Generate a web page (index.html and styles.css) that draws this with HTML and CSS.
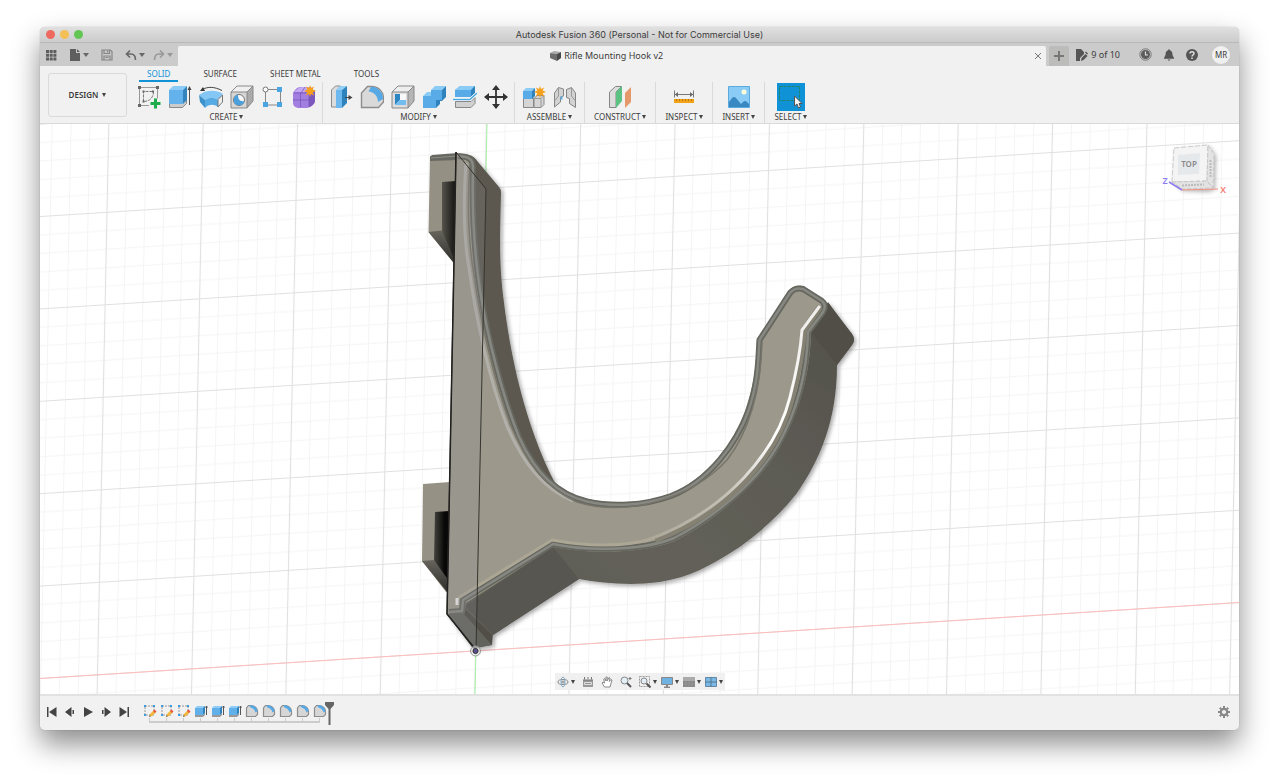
FILE: index.html
```html
<!DOCTYPE html>
<html lang="en">
<head>
    <meta charset="UTF-8">
    <meta name="viewport" content="width=device-width, initial-scale=1.0">
    <title>Autodesk Fusion 360</title>
    <link rel="stylesheet" href="styles.css">
</head>
<body>
    <!-- Shared icons -->
    <svg class="sprite" aria-hidden="true">
        <symbol id="i-sketch" viewBox="0 0 14 14">
            <path d="M2 2h9v9H2z" fill="none" stroke="#999" stroke-dasharray="2 1"/>
            <path d="M1 1h2v2H1zM10 1h2v2h-2zM1 10h2v2H1z" fill="#3d9be0"/>
            <path d="M6 13l1-3 4-4 2 2-4 4z" fill="#f4b73c"/>
            <path d="M10 7l1.500-1.500 2 2L12 9z" fill="#e8563f"/>
            <path d="M6 13l.7-2 1.300 1.300z" fill="#666"/>
        </symbol>
        <symbol id="i-box" viewBox="0 0 14 14">
            <path d="M1 11h8v2H1zM9 13l2-2v-2l-2 2z" fill="#999"/>
            <path d="M1 4h8v7H1z" fill="#62b0ea"/>
            <path d="M1 4l2-2h8L9 4z" fill="#8fcdf8"/>
            <path d="M9 4l2-2v7l-2 2z" fill="#2f83bd"/>
            <path d="M12.500 11V2M11.500 3.500l1-1.500 1 1.500" fill="none" stroke="#555"/>
        </symbol>
        <symbol id="i-fillet" viewBox="0 0 14 14">
            <path d="M1.500 12.500V4l2-2.500H6c4 0 6.500 3 6.500 6v3l-2 2z" fill="#d6d6d6" stroke="#8d8d8d" stroke-width="1.200"/>
            <path d="M4 1.500h2c3.500 0 6 2.500 6.500 5.500l-2 1.500C10 6 8 4 5.500 3.500z" fill="#55a9e6"/>
        </symbol>
        <symbol id="i-star" viewBox="0 0 12 12">
            <path d="M6 0l1 3 3-1.500L8.700 4.500 12 6 8.700 7.300 10.300 10.500 7 9 6 12 5 9 1.700 10.500 3.300 7.300 0 6l3.300-1.500L1.900 1.500 5 3z" fill="#f5a11b"/>
        </symbol>
    </svg>

    <div class="window">
        <header class="titlebar">
            <div class="lights">
                <button class="light red" aria-label="Close window"></button>
                <button class="light yellow" aria-label="Minimize window"></button>
                <button class="light green" aria-label="Zoom window"></button>
            </div>
            <h1>Autodesk Fusion 360 (Personal - Not for Commercial Use)</h1>
        </header>

        <div class="tabstrip">
            <div class="quick">
                <button aria-label="Data panel">
                    <svg width="12" height="12" viewBox="0 0 12 12" fill="#5e5e5e"><path d="M1 1h3v3H1zM4.700 1h3v3h-3zM8.400 1h3v3h-3zM1 4.700h3v3H1zM4.700 4.700h3v3h-3zM8.400 4.700h3v3h-3zM1 8.400h3v3H1zM4.700 8.400h3v3h-3zM8.400 8.400h3v3h-3z"/></svg>
                </button>
                <button class="menu file" aria-label="File">
                    <svg width="12" height="12" viewBox="0 0 12 12" fill="#5e5e5e"><path d="M1 0h6v4h4v8H1zM8 0l3 3H8z"/></svg>
                    <i class="caret"></i>
                </button>
                <button class="save" aria-label="Save">
                    <svg width="12" height="12" viewBox="0 0 12 12" fill="none" stroke="#858585" stroke-width="1.200"><path d="M1 1h8.500L11 2.500V11H1z"/><path d="M3 1v3.500h5.500V1M6.500 1.500v2M3 11V7h6v4M4.500 8.500h3"/></svg>
                </button>
                <button class="menu" aria-label="Undo">
                    <svg width="12" height="12" viewBox="0 0 12 12" fill="none" stroke="#666" stroke-width="1.600"><path d="M5 1.500L1.500 5 5 8.500M2 5h4c3 0 4.500 2 4.500 6"/></svg>
                    <i class="caret"></i>
                </button>
                <button class="menu faded" aria-label="Redo">
                    <svg width="12" height="12" viewBox="0 0 12 12" fill="none" stroke="#666" stroke-width="1.600"><path d="M7 1.500L10.500 5 7 8.500M10 5H6c-3 0-4.500 2-4.500 6"/></svg>
                    <i class="caret"></i>
                </button>
            </div>
            <div class="doc-tab">
                <div class="doc-name">
                    <svg width="13" height="12" viewBox="0 0 13 12"><path d="M1 3l4-2 7 1-4 2z" fill="#aaa"/><path d="M1 3l7 1v7L1 8z" fill="#6d6d6d"/><path d="M8 4l4-2v6l-4 3z" fill="#484848"/></svg>
                    <span>Rifle Mounting Hook v2</span>
                </div>
                <button class="close" aria-label="Close tab">
                    <svg width="8" height="8" viewBox="0 0 8 8"><path d="M1 1l6 6M7 1L1 7" stroke="#777"/></svg>
                </button>
            </div>
            <button class="new-tab" aria-label="New tab">
                <svg width="10" height="10" viewBox="0 0 10 10"><path d="M5 0v10M0 5h10" stroke="#777" stroke-width="2"/></svg>
            </button>
            <div class="account">
                <button class="docs">
                    <svg width="12" height="12" viewBox="0 0 12 12" fill="#555"><path d="M0 0h5l3 3v2L4 9v3H0zM5 12l.5-3 4-4 2 2-4 4z"/><path d="M9 3.500l1-1L12 4.500l-.8 1z"/></svg>
                    <span>9 of 10</span>
                </button>
                <button aria-label="Job status">
                    <svg width="13" height="13" viewBox="0 0 13 13"><circle cx="6.500" cy="6.500" r="5.700" fill="none" stroke="#777"/><circle cx="6.500" cy="6.500" r="4.500" fill="#5c5c5c"/><path d="M6.500 3.500v3.500H9" fill="none" stroke="#ddd" stroke-width="1.200"/></svg>
                </button>
                <button aria-label="Notifications">
                    <svg width="12" height="12" viewBox="0 0 12 12" fill="#555"><path d="M6 0l1 1.200C9 1.800 9.500 3.500 9.500 6L11 9v.8H1V9l1.500-3c0-2.500.5-4.200 2.500-4.800zM4.500 10.500h3L6 12z"/></svg>
                </button>
                <button aria-label="Help">
                    <svg width="12" height="12" viewBox="0 0 12 12"><circle cx="6" cy="6" r="6" fill="#555"/><path d="M4 4.500c0-2.500 4-2.500 4 0C8 6 6 6 6 7.500M6 8.500V10" fill="none" stroke="#e2e2e2" stroke-width="1.500"/></svg>
                </button>
                <button class="avatar">MR</button>
            </div>
        </div>

        <div class="toolbar">
            <button class="workspace">DESIGN <i class="caret"></i></button>
            <div class="ribbon">
                <nav class="ribbon-tabs">
                    <a href="#solid" class="active">SOLID</a>
                    <a href="#surface">SURFACE</a>
                    <a href="#sheet">SHEET METAL</a>
                    <a href="#tools">TOOLS</a>
                </nav>
                <div class="groups">
                    <div class="group large">
                        <div class="icons">
                            <button aria-label="Create sketch">
                                <svg width="24" height="24" viewBox="0 0 24 24"><path d="M2.500 2.500h18v11M12 20.500H2.500v-18" fill="none" stroke="#999"/><path d="M6.500 16.500v-10h10c0 6-4 10-10 10z" fill="none" stroke="#777" stroke-dasharray="3 1"/><path d="M1 1h3v3H1zM19 1h3v3h-3zM1 19h3v3H1zM5.500 5.500h2v2h-2zM15 5.500h2v2h-2zM5.500 15.500h2v2h-2z" fill="#666"/><path d="M18.500 13.500v10M13.500 18.500h10" stroke="#1fac4b" stroke-width="3"/></svg>
                            </button>
                            <button aria-label="Extrude">
                                <svg width="24" height="24" viewBox="0 0 24 24"><path d="M1.500 18v4.500h13l4-4V15z" fill="#ccc" stroke="#8a8a8a"/><path d="M1 5h14v14H1z" fill="#64b2eb"/><path d="M1 5l4-4h14l-4 4z" fill="#8acbf8"/><path d="M15 5l4-4v14l-4 4z" fill="#3285bd"/><path d="M21.500 20V3" stroke="#555"/><path d="M19.500 5l2-4 2 4z" fill="#444"/></svg>
                            </button>
                            <button aria-label="Revolve">
                                <svg width="24" height="24" viewBox="0 0 24 24"><path d="M0 10C6 5 17 4 24 9l-5 6c-4-3-9-3-13 0z" fill="#84c7f5"/><path d="M0 10l6 5v8l-5-6z" fill="#3d92cc"/><path d="M6 15c4-3 9-3 13 0v7c-4-3-9-3-13 1z" fill="#57abe4"/><path d="M19 14.500l4.500-4.500v7L19 22z" fill="#eee" stroke="#777"/><path d="M3 4.500c6-3 12-3 20 1" fill="none" stroke="#444"/><path d="M1 6l3-4 2 4z" fill="#333"/></svg>
                            </button>
                            <button aria-label="Hole">
                                <svg width="24" height="24" viewBox="0 0 24 24"><path d="M1 7l6-6h16l-6 6z" fill="#f0f0f0"/><path d="M17 7l6-6v15l-6 7z" fill="#aaa"/><path d="M1 7h16v16H1z" fill="#d6d6d6"/><path d="M1 7l6-6h16v15l-6 7H1zM1 7h16v16M17 7l6-6" fill="none" stroke="#888"/><circle cx="9" cy="15" r="5.500" fill="#f7f7f7" stroke="#777"/><path d="M8 9.800c0 5 2 7 6.300 6.200A5.300 5.300 0 1 1 8 9.800z" fill="#4aa0dc"/></svg>
                            </button>
                            <button aria-label="Pattern">
                                <svg width="24" height="24" viewBox="0 0 24 24"><path d="M5 4.500h13M4.500 5v13M6 20h12M19.500 6v12" stroke="#888"/><path d="M16 2h5v5h-5zM2 17h5v5H2zM16 17h5v5h-5z" fill="#4ba5e2"/><circle cx="4.500" cy="4.500" r="2.500" fill="#fff" stroke="#777"/></svg>
                            </button>
                            <button aria-label="Create form">
                                <svg width="24" height="24" viewBox="0 0 24 24"><path d="M1 9q0-2 2-4l2-2q2-1 4-1h10l4 5v9q0 2-2 4-3 3-6 3H6q-5-1-5-5z" fill="#a27ee0"/><path d="M2 7l4-3.500Q8 2 11 2h7l-3 5H5z" fill="#c4a8f2"/><path d="M17 8l6-3v11q-1 4-6 6z" fill="#7b58bd"/><path d="M1 15h16l6-4M8.500 8v14M1.500 8H17v14M9 8l4-6" fill="none" stroke="#7452b4" stroke-width=".7"/><use href="#i-star" x="12" y="0" width="12" height="12"/></svg>
                            </button>
                        </div>
                        <button class="group-label">CREATE<i class="caret"></i></button>
                    </div>
                    <div class="group large">
                        <div class="icons">
                            <button aria-label="Press pull">
                                <svg width="24" height="24" viewBox="0 0 24 24"><path d="M2.500 22V5l4-4h5L8 5v17z" fill="#ddd" stroke="#8a8a8a"/><path d="M7 5h6v18H7z" fill="#6db8ee"/><path d="M7 5l4-4h7l-5 4z" fill="#93d0f8"/><path d="M13 5l5-4v17l-5 5z" fill="#2f83bd"/><path d="M16 12.500h4" stroke="#444"/><path d="M19.500 10l4 2.500-4 2.500z" fill="#444"/></svg>
                            </button>
                            <button aria-label="Fillet">
                                <svg width="24" height="24" viewBox="0 0 24 24"><path d="M1.500 22.500V8l6-6.500h4c7 0 12 5 12 12V17l-5 5.500z" fill="#d9d9d9" stroke="#8d8d8d" stroke-width="1.400"/><path d="M11 1.800c7 0 12 5 12 12.200l-5 3C18 11 14 7 8.500 6.500z" fill="#57a9e5"/></svg>
                            </button>
                            <button aria-label="Shell">
                                <svg width="24" height="24" viewBox="0 0 24 24"><path d="M1 7l6-6h16l-6 6z" fill="#eee"/><path d="M17 7l6-6v15l-6 7z" fill="#b5b5b5"/><path d="M1 7h16v16H1z" fill="#ddd"/><path d="M1 7l6-6h16v15l-6 7H1zM1 7h16v16M17 7l6-6" fill="none" stroke="#888"/><path d="M4 9h11v11H4z" fill="#f8f8f8"/><path d="M4 9h5v6l-5 5z" fill="#2d86c4"/><path d="M4 20l5-5h6v5z" fill="#72bdf0"/></svg>
                            </button>
                            <button aria-label="Combine">
                                <svg width="24" height="24" viewBox="0 0 24 24"><path d="M1 11l4-4h6l-1 4zM9 5l4-4h11l-4 4z" fill="#8bccf7"/><path d="M1 11h8V5h11v10h-6v8H1z" fill="#58abe6"/><path d="M20 5l4-4v11l-4 4h-2v3l-4 4v-8h6z" fill="#2f83bd"/></svg>
                            </button>
                            <button aria-label="Split body">
                                <svg width="24" height="24" viewBox="0 0 24 24"><path d="M2 5l5-4h15v7l-4 4H2z" fill="#58abe6"/><path d="M2 5l5-4h15l-4 4z" fill="#8bccf7"/><path d="M18 5l4-4v7l-4 4z" fill="#2f83bd"/><path d="M2.500 16.500H18l4-4v6l-4 4H2.500z" fill="#d0d0d0" stroke="#888"/><path d="M0 14.500h17L24 8" fill="none" stroke="#fff" stroke-width="3"/><path d="M0 14.500h17L24 8" fill="none" stroke="#49a7e2" stroke-width="1.400"/></svg>
                            </button>
                            <button aria-label="Move">
                                <svg width="24" height="24" viewBox="0 0 24 24"><path d="M12 3v18M3 12h18" stroke="#333" stroke-width="1.800"/><path d="M12 0l4 5H8zM12 24l4-5H8zM0 12l5-4v8zM24 12l-5-4v8z" fill="#333"/></svg>
                            </button>
                        </div>
                        <button class="group-label">MODIFY<i class="caret"></i></button>
                    </div>
                    <div class="group">
                        <div class="icons">
                            <button aria-label="New component">
                                <svg width="24" height="24" viewBox="0 0 24 24"><path d="M1.500 13.500h10v9h-10zM12 13.500l3-3h7v9l-3 3h-7z" fill="#d5d5d5" stroke="#888"/><path d="M12 13.500h7v9M19 13.500l3-3" fill="none" stroke="#999"/><path d="M1 6h9v8H1z" fill="#58abe6"/><path d="M1 6l3-3h9l-3 3z" fill="#8bccf7"/><path d="M10 6l3-3v8l-3 3z" fill="#2f83bd"/><use href="#i-star" x="12" y="1" width="12" height="12"/></svg>
                            </button>
                            <button aria-label="Joint">
                                <svg width="24" height="24" viewBox="0 0 24 24" stroke-linejoin="round"><path d="M1.500 8l4-5.500 5 1.500v7l-3 1v5l-6 5zM22.500 8l-4-5.500-5 2v8l3 1v5l6 4z" fill="#d3d3d3" stroke="#858585"/><path d="M5.500 3v8l-4 5M18.500 3v8l4 5" fill="none" stroke="#999"/><path d="M7.500 11.500h2v3h-2z" fill="#5eb1ea"/></svg>
                            </button>
                        </div>
                        <button class="group-label">ASSEMBLE<i class="caret"></i></button>
                    </div>
                    <div class="group single">
                        <div class="icons">
                            <button aria-label="Offset plane">
                                <svg width="24" height="24" viewBox="0 0 24 24"><path d="M1.500 22.500V7l6-5.500h6L8 7v15.500z" fill="#ddd" stroke="#858585"/><path d="M8 7l6-6v15l-6 7z" fill="#5cc283"/><path d="M17 8l6-6v15l-6 6z" fill="#e5986a"/></svg>
                            </button>
                        </div>
                        <button class="group-label">CONSTRUCT<i class="caret"></i></button>
                    </div>
                    <div class="group single">
                        <div class="icons">
                            <button aria-label="Measure">
                                <svg width="24" height="24" viewBox="0 0 24 24"><path d="M2.500 5.500v7M21.500 5.500v7M3 9.500h18" stroke="#777"/><path d="M3 9.500L6 7v5zM21 9.500L18 7v5z" fill="#666"/><path d="M2 14h20v4H2z" fill="#f5a316"/><path d="M4.500 14v2M7.500 14v2M10.500 14v2M13.500 14v2M16.500 14v2M19.500 14v2" stroke="#b5781a"/></svg>
                            </button>
                        </div>
                        <button class="group-label">INSPECT<i class="caret"></i></button>
                    </div>
                    <div class="group single">
                        <div class="icons">
                            <button aria-label="Insert image">
                                <svg width="24" height="24" viewBox="0 0 24 24"><path d="M1.500 1.500h21v21h-21z" fill="#8bccf7" stroke="#5aaae0"/><path d="M2 17l3-4q2-2 4 0l5 6 2-2q2-2 4 0l2 2v3H2z" fill="#3988c2"/><circle cx="17" cy="7" r="2.500" fill="#fffbd8"/></svg>
                            </button>
                        </div>
                        <button class="group-label">INSERT<i class="caret"></i></button>
                    </div>
                    <div class="group single">
                        <div class="icons">
                            <button aria-label="Select" class="selected">
                                <svg width="28" height="28" viewBox="0 0 28 28"><path d="M2.500 3.500h20v14h-20z" fill="none" stroke="#20846d" stroke-dasharray="3 1"/><path d="M17.500 13v10l2.500-2 1.500 4 2-1-1.500-3.500h3z" fill="#f5f5f5" stroke="#555"/></svg>
                            </button>
                        </div>
                        <button class="group-label">SELECT<i class="caret"></i></button>
                    </div>
                </div>
            </div>
        </div>

        <main class="viewport">
            <svg class="scene" viewBox="40 124 1199 570" preserveAspectRatio="xMidYMid slice" role="img" aria-label="Rifle mounting hook model">
                <defs>
                    <pattern id="grid" x="-50" y="-50" width="100" height="100" patternUnits="userSpaceOnUse" patternTransform="matrix(.945 -.0598 -.019 .925 475.500 650.900)">
                        <path d="M10 0v100M30 0v100M70 0v100M90 0v100M0 10h100M0 30h100M0 70h100M0 90h100" stroke="#f3f3f3"/>
                        <path d="M50 0v100M0 50h100" stroke="#e0e0e0" stroke-width="1.200"/>
                    </pattern>
                    <linearGradient id="recess" x1="0" x2="1" y1="0" y2="0">
                        <stop offset="0" stop-color="#56544c"/>
                        <stop offset=".9" stop-color="#181816"/>
                    </linearGradient>
                    <linearGradient id="recess2" x1="0" x2="1" y1="0" y2="0">
                        <stop offset="0" stop-color="#44433d"/>
                        <stop offset=".7" stop-color="#080808"/>
                    </linearGradient>
                    <linearGradient id="side" x1="0" x2="1" y1="1" y2="0">
                        <stop offset="0" stop-color="#605e57"/>
                        <stop offset=".25" stop-color="#605e57"/>
                        <stop offset=".4" stop-color="#63615a"/>
                        <stop offset=".75" stop-color="#5b5952"/>
                        <stop offset="1" stop-color="#514f47"/>
                    </linearGradient>
                    <linearGradient id="under" x1="0" x2="0" y1="0" y2="1">
                        <stop offset="0" stop-color="#66645c"/>
                        <stop offset="1" stop-color="#2c2b28"/>
                    </linearGradient>
                    <linearGradient id="shine" gradientUnits="userSpaceOnUse" x1="640" y1="545" x2="810" y2="330">
                        <stop offset="0" stop-color="#aaa595"/>
                        <stop offset=".35" stop-color="#c5c2b8"/>
                        <stop offset=".6" stop-color="#fff"/>
                        <stop offset="1" stop-color="#f0efec"/>
                    </linearGradient>
                    <filter id="shadow" x="-10%" y="-10%" width="120%" height="120%">
                        <feDropShadow dx="2" dy="2" stdDeviation="2" flood-opacity=".35"/>
                    </filter>
                </defs>
                <rect x="40" y="124" width="1199" height="570" fill="#fff"/>
                <rect x="40" y="124" width="1199" height="570" fill="url(#grid)"/>
                <path d="M40 678.500L1239 602.500" stroke="#ffbcbc"/>
                <path d="M487 124L475 694" stroke="#a6f3a6"/>

                <!-- Wall blocks behind the plate -->
                <path d="M430 156l26-2v106l-3 2-24.500-30z" fill="#949084"/>
                <path d="M430 161v-4l2-2 26-2v7z" fill="#676861"/>
                <path d="M431 158l26-2" stroke="#8d8e88"/>
                <path d="M428.500 232l13-1.500L456 245v20l-3-3z" fill="url(#under)"/>
                <path d="M442 182l14-1v82l-14-32z" fill="url(#recess)"/>
                <path d="M423 484l27-2v110l-4 0-24-31z" fill="#959185"/>
                <path d="M422 561l12.500-1L448 575v18z" fill="url(#under)"/>
                <path d="M435 512l14-1v70l-15-21z" fill="url(#recess2)"/>

                <!-- Extruded sides -->
                <g filter="url(#shadow)">
                    <path d="M456 154L469 155Q474 156 478 162L499 187Q501 189 501 193C500 235 499 260 503 295C510 355 525 425 555 483L535 478L470 330L462 200z" fill="#5b5850"/>
                    <path d="M463 600L552 540C600 546 640 540 668 530C730 500 785 440 800 360L811 332L828 302Q845 325 852 334Q856 340 852 345L837 365C837 420 820 460 797 493C780 515 755 537 735 550C710 566 690 577 660 582C630 586 602 583 579 579L493 635L492 645L477 648L475 651L447 614z" fill="url(#side)"/>
                </g>
                <path d="M811 332L828 303Q845 325 852 334Q856 340 852 345L837 365z" fill="#504e47"/>
                <path d="M553 547L579 579L493 635L465 606z" fill="#585650"/>
                <path d="M447 614l18-1 27 32-15 2-2 4z" fill="#63635d"/>
                <path d="M466 610l26 25v10l-28-31z" fill="#504e47"/>

                <!-- Front face and its rounded rim -->
                <path d="M456 154L466 155Q474 157 475 166C474 205 475 245 482 290C489 335 504 395 521 437C537 473 560 492 587 499C612 505 642 504 670 494C708 479 734 441 745 411C756 380 756 360 757 339L788 292Q794 284 804 286L824 300Q829 305 825 313L811 333C810 375 799 412 780 447C757 487 712 522 675 541C645 553 592 555 553 547L466 603L464 614L447 614z" fill="#9c988b"/>
                <path d="M458 156L466 157Q473 159 473 167C472 205 473 245 480 290C487 335 502 395 519 437C536 475 559 495 587 501.500C612 507 643 506 671 496C710 481 737 442 748 412C759 380 758 360 759.500 340L790 293Q795 287 803 289L822 301Q827 305 823 312L808 332C807 375 797 411 778 445C755 485 711 519 674 538C645 550 592 552 553 544L463 600L462 611L449 612" fill="none" stroke="#66675f" stroke-width="6"/>
                <path d="M458 156L466 157Q473 159 473 167C472 205 473 245 480 290C487 335 502 395 519 437C536 475 559 495 587 501.500C612 507 643 506 671 496C710 481 737 442 748 412C759 380 758 360 759.500 340L790 293Q795 287 803 289L822 301Q827 305 823 312L808 332C807 375 797 411 778 445C755 485 711 519 674 538C645 550 592 552 553 544L463 600L462 611L449 612" fill="none" stroke="#878882" stroke-width="2.500"/>
                <path d="M466 163C463 205 464 240 469 268C476 320 490 382 507 426C523 463 543 489 573 501" fill="none" stroke="#b2b0aa" stroke-width="3"/>
                <path d="M470 163C467 205 468 240 474 275C480 320 495 384 511 426C528 465 548 490 577 502C625 517 690 500 727 460C749 432 761 390 762 342" fill="none" stroke="#77756b" stroke-width="1.500"/>
                <path d="M458 598L552 540C590 547 625 547 655 538" fill="none" stroke="#aca695" stroke-width="3"/>
                <path d="M655 540C730 512 779 452 792 397Q802 358 804 330L820 307" fill="none" stroke="#858173" stroke-width="6"/>
                <path d="M645 541C728 512 777 450 790 397Q800 358 802 330L819 307" fill="none" stroke="url(#shine)" stroke-width="3" stroke-linecap="round"/>
                <path d="M457 598v7" stroke="#e8e7e5" stroke-width="3"/>

                <!-- Sketch plane -->
                <path d="M456 152L486 189L476 650L447 614z" fill="#909098" fill-opacity=".2" stroke="#35342f"/>
                <path d="M456 152L454 262L447 614L476 650" fill="none" stroke="#22211f" stroke-width="1.500"/>
                <circle cx="475.500" cy="651" r="5" fill="#ddd" fill-opacity=".6" stroke="#999"/>
                <circle cx="475.500" cy="651" r="2.500" fill="#5a4f90" stroke="#333"/>
            </svg>

            <svg class="view-cube" width="72" height="54" viewBox="0 0 72 54" role="img" aria-label="View cube">
                <defs>
                    <filter id="cube-shadow" x="-20%" y="-20%" width="150%" height="150%">
                        <feDropShadow dx="2" dy="2" stdDeviation="2" flood-opacity=".3"/>
                    </filter>
                </defs>
                <path d="M14 6l34-3 6 9-1 34-7 2-25-1-9-9z" fill="#dedede" filter="url(#cube-shadow)"/>
                <path d="M14 6l34-3-1 36-35 1z" fill="#f4f4f4" stroke="#ccc" stroke-dasharray="5 2"/>
                <path d="M18 13l22-2-1 21-21 1z" fill="#e6e9ec"/>
                <path d="M48 3l6 9-1 34-6-7zM12 40l35-1 6 7-30 1z" fill="#e3e3e3" stroke="#c7c7c7" stroke-dasharray="4 2"/>
                <path d="M22 43.500l22-1M50.500 18v18" stroke="#bbb" stroke-width="2" stroke-dasharray="2 1"/>
                <path d="M9 40l13 8" stroke="#8d7bf0" stroke-width="1.500"/>
                <path d="M22 48l36-1" stroke="#f0917f"/>
                <text x="29" y="25" class="cube-face">TOP</text>
                <text x="5" y="42" class="axis-z">Z</text>
                <text x="63" y="51" class="axis-x">X</text>
            </svg>

            <div class="navbar">
                <button class="menu" aria-label="Orbit"><svg width="12" height="12" viewBox="0 0 12 12" fill="none" stroke="#888"><ellipse cx="6" cy="6" rx="5" ry="2.500"/><ellipse cx="6" cy="6" rx="2" ry="5" stroke="#7fa9c6"/><path d="M4.500 6h3M6 4.500v3"/></svg><i class="caret"></i></button>
                <button aria-label="Look at"><svg width="12" height="12" viewBox="0 0 12 12"><path d="M1 4h10v7H1z" fill="#999"/><path d="M2.500 3.500V1M6 3V1M9.500 3.500V1M1 4h10" stroke="#777"/><path d="M2.500 6.500h7v2h-7z" fill="none" stroke="#ddd"/></svg></button>
                <button aria-label="Pan"><svg width="12" height="12" viewBox="0 0 12 12"><path d="M3.500 11L1 7l1-1 1.500 1-.7-4 1-.5L5 5V1h1.200v4L8 1.500l1 .5-.7 3.500L10 3.500l1 .5-2 7z" fill="#fff" stroke="#888"/></svg></button>
                <button class="zoom" aria-label="Zoom"><svg width="12" height="12" viewBox="0 0 12 12"><circle cx="4.500" cy="4.500" r="3.500" fill="#e3eff6" stroke="#888"/><path d="M7 7l4 4" stroke="#555" stroke-width="2"/><path d="M10 1v3M8.500 2.500h3" stroke="#777"/></svg></button>
                <button class="menu" aria-label="Fit"><svg width="12" height="12" viewBox="0 0 12 12"><path d="M.5.500h10v10H.5z" fill="none" stroke="#999" stroke-dasharray="2 1"/><circle cx="5" cy="5" r="3" fill="#e3eff6" stroke="#888"/><path d="M7.500 7.500l4 4" stroke="#555" stroke-width="2"/></svg><i class="caret"></i></button>
                <button class="menu" aria-label="Display settings"><svg width="12" height="12" viewBox="0 0 12 12"><path d="M.5 1.500h11v7H.5z" fill="#6eb2e2" stroke="#888"/><path d="M5 9h2v1.500h2V12H3v-1.500h2z" fill="#888"/></svg><i class="caret"></i></button>
                <button class="menu" aria-label="Grid and snaps"><svg width="12" height="12" viewBox="0 0 12 12"><path d="M0 1h12v10H0z" fill="#888"/><path d="M0 1h12v4H0z" fill="#aaa"/><path d="M3 5v6M6 5v6M9 5v6M0 8h12" stroke="#939393"/></svg><i class="caret"></i></button>
                <button class="menu" aria-label="Viewports"><svg width="12" height="12" viewBox="0 0 12 12"><path d="M.5 1.500h11v9H.5z" fill="#7ab9e6" stroke="#6388a3"/><path d="M6 1v10M0 6h12" stroke="#54788f"/></svg><i class="caret"></i></button>
            </div>
        </main>

        <footer class="timeline">
            <div class="playback">
                <button aria-label="Go to start"><svg width="10" height="10" viewBox="0 0 10 10"><path d="M0 0h1.500v10H0zM9.500 0v10L2 5z"/></svg></button>
                <button aria-label="Step back"><svg width="10" height="10" viewBox="0 0 10 10"><path d="M6.500 0v10L0 5zM7.500 3H9v4H7.500z"/></svg></button>
                <button aria-label="Play"><svg width="10" height="10" viewBox="0 0 10 10"><path d="M1 0l9 5-9 5z"/></svg></button>
                <button aria-label="Step forward"><svg width="10" height="10" viewBox="0 0 10 10"><path d="M3.500 0v10L10 5zM1 3h1.500v4H1z"/></svg></button>
                <button aria-label="Go to end"><svg width="10" height="10" viewBox="0 0 10 10"><path d="M8.500 0H10v10H8.500zM.5 0v10L8 5z"/></svg></button>
            </div>
            <div class="history">
                <div class="features">
                    <button aria-label="Sketch 1"><svg><use href="#i-sketch"/></svg></button>
                    <button aria-label="Sketch 2"><svg><use href="#i-sketch"/></svg></button>
                    <button aria-label="Sketch 3"><svg><use href="#i-sketch"/></svg></button>
                    <button aria-label="Extrude 1"><svg><use href="#i-box"/></svg></button>
                    <button aria-label="Extrude 2"><svg><use href="#i-box"/></svg></button>
                    <button aria-label="Extrude 3"><svg><use href="#i-box"/></svg></button>
                    <button aria-label="Fillet 1"><svg><use href="#i-fillet"/></svg></button>
                    <button aria-label="Fillet 2"><svg><use href="#i-fillet"/></svg></button>
                    <button aria-label="Fillet 3"><svg><use href="#i-fillet"/></svg></button>
                    <button aria-label="Fillet 4"><svg><use href="#i-fillet"/></svg></button>
                    <button aria-label="Fillet 5"><svg><use href="#i-fillet"/></svg></button>
                </div>
                <div class="track"></div>
            </div>
            <svg class="marker" width="9" height="23" viewBox="0 0 9 23"><path d="M0 0h9v3L5.500 7v16h-2V7L0 3z" fill="#666"/></svg>
            <button class="settings" aria-label="Timeline settings">
                <svg width="12" height="12" viewBox="0 0 12 12"><circle cx="6" cy="6" r="3.200" fill="none" stroke="#888" stroke-width="2.200"/><path d="M6 0v2M6 10v2M0 6h2M10 6h2M1.800 1.800l1.400 1.400M8.800 8.800l1.400 1.400M10.200 1.800L8.800 3.200M3.200 8.800l-1.400 1.400" stroke="#888" stroke-width="2"/></svg>
            </button>
        </footer>
    </div>
</body>
</html>
```

FILE: styles.css
```css
:root {
    --chrome: #cbcbcb;
    --panel: #f1f1f1;
    --line: #dadada;
    --text: #3c3c3c;
    --accent: #1092d6;
}

* {
    box-sizing: border-box;
    margin: 0;
    padding: 0;
}

body {
    display: flex;
    min-height: 100vh;
    padding: 27px 40px 53px;
    background: #fff;
    color: var(--text);
    font-family: "Noto Sans", "Open Sans", sans-serif;
    font-size: 8px;
    line-height: 12px;
}

button {
    display: flex;
    align-items: center;
    justify-content: center;
    border: none;
    background: none;
    color: inherit;
    font: inherit;
    cursor: pointer;
}

svg {
    display: block;
    flex: none;
}

.sprite {
    position: absolute;
    width: 0;
    height: 0;
}

.caret {
    border: 2px solid transparent;
    border-top: 4px solid #444;
    border-bottom: 0;
}

.window {
    flex: 1;
    display: flex;
    flex-direction: column;
    min-width: 0;
    border-radius: 5px;
    background: var(--panel);
    box-shadow: 0 0 1px rgba(0, 0, 0, 0.4), 0 14px 28px rgba(0, 0, 0, 0.45);
    overflow: hidden;
}

/* Title bar */
.titlebar {
    display: flex;
    align-items: center;
    height: 16px;
    background: linear-gradient(#e0e0e0, #cccccc);
    border-bottom: 1px solid #b9b9b9;
}

.titlebar h1 {
    flex: 1;
    padding-right: 50px;
    text-align: center;
    font-family: Inter, "Liberation Sans", sans-serif;
    font-size: 9px;
    font-weight: 400;
}

.lights {
    display: flex;
    gap: 5px;
    width: 50px;
    padding-left: 6px;
}

.light {
    width: 9px;
    height: 9px;
    border-radius: 50%;
}

.red { background: #ee6a5e; }
.yellow { background: #f4bf56; }
.green { background: #62c554; }

/* Document tabs */
.tabstrip {
    display: flex;
    height: 23px;
    background: var(--chrome);
}

.quick {
    display: flex;
    align-items: center;
    gap: 8px;
    width: 138px;
    padding-left: 5px;
}

.menu {
    gap: 4px;
}

.quick .file {
    gap: 2px;
    margin-left: 4px;
}

.quick .save {
    margin-left: 4px;
    margin-right: 4px;
}

.quick .caret {
    border-width: 4px 3px 0;
    border-top-color: #666;
}

.quick .menu {
    gap: 2px;
}

.faded {
    opacity: 0.5;
}

.doc-tab {
    flex: 1;
    display: flex;
    align-items: center;
    margin-top: 3px;
    padding-right: 4px;
    background: var(--panel);
    border-radius: 2px 2px 0 0;
}

.doc-name {
    flex: 1;
    display: flex;
    align-items: center;
    justify-content: center;
    gap: 2px;
    font-size: 9px;
}

.new-tab {
    width: 20px;
    margin: 3px 0 0 3px;
    background: #bcbcbb;
    border-radius: 2px 2px 0 0;
}

.account {
    display: flex;
    align-items: center;
    gap: 11px;
    padding: 0 9px 0 7px;
}

.docs {
    gap: 3px;
    margin-right: 8px;
    font-size: 9px;
}

.avatar {
    width: 18px;
    height: 18px;
    margin-left: 3px;
    border-radius: 50%;
    background: #f0f0f0;
}

/* Toolbar */
.toolbar {
    display: flex;
    height: 58px;
    padding-left: 8px;
    border-bottom: 1px solid var(--line);
    background: var(--panel);
}

.workspace {
    gap: 4px;
    width: 79px;
    height: 44px;
    margin: 7px 4px 0 0;
    border: 1px solid var(--line);
    border-radius: 3px;
    font-weight: 600;
}

.ribbon-tabs {
    display: flex;
    gap: 17px;
    height: 16px;
    padding-left: 8px;
}

.ribbon-tabs a {
    padding: 2px 8px 0;
    color: var(--text);
    text-decoration: none;
}

.ribbon-tabs .active {
    color: var(--accent);
    border-bottom: 2px solid var(--accent);
}

.groups {
    display: flex;
}

.group {
    padding: 0 7px;
    border-left: 1px solid var(--line);
}

.group.large {
    padding: 0 6px;
}

.group:first-child {
    border-left: none;
}

.group.single {
    padding: 0 9px;
}

.icons {
    display: flex;
    justify-content: center;
    align-items: center;
    gap: 7px;
    height: 29px;
}

.selected {
    background: var(--accent);
}

.group-label {
    gap: 2px;
    width: 100%;
}

/* Model view */
.viewport {
    position: relative;
    flex: 1;
    min-height: 300px;
    background: #fff;
}

.scene {
    position: absolute;
    inset: 0;
    width: 100%;
    height: 100%;
}

.view-cube {
    position: absolute;
    top: 18px;
    right: 7px;
}

.cube-face {
    fill: #888;
    font-size: 8px;
    font-weight: 600;
    text-anchor: middle;
}

.axis-z,
.axis-x {
    fill: #8d7bf0;
    font-size: 9px;
    font-weight: 600;
    text-anchor: middle;
}

.axis-x {
    fill: #f57c73;
}

.navbar {
    position: absolute;
    bottom: 4px;
    left: 50%;
    display: flex;
    align-items: center;
    gap: 7px;
    height: 17px;
    padding: 0 2px;
    background: #f0f0f0;
    transform: translateX(-50%);
}

.navbar .menu {
    gap: 2px;
}

.navbar .menu + .menu {
    margin-left: -3px;
}

/* Timeline */
.timeline {
    display: flex;
    height: 36px;
    padding: 0 9px 2px 3px;
    border-top: 2px solid #e2e2e2;
    background: var(--panel);
}

.playback {
    display: flex;
    align-items: center;
    margin-right: 8px;
}

.playback button {
    width: 18px;
    height: 18px;
}

.playback svg {
    fill: #444;
}

.history {
    padding-top: 8px;
}

.features {
    display: flex;
}

.features button {
    width: 17px;
    height: 14px;
}

.features svg {
    width: 14px;
    height: 14px;
}

.track {
    height: 5px;
    margin: 0 8px;
    border-bottom: 2px solid #ccc;
    background: repeating-linear-gradient(90deg, #ccc 0 1px, transparent 1px 17px);
}

.marker {
    margin: 6px 0 0 -3px;
}

.settings {
    margin-left: auto;
}
```
